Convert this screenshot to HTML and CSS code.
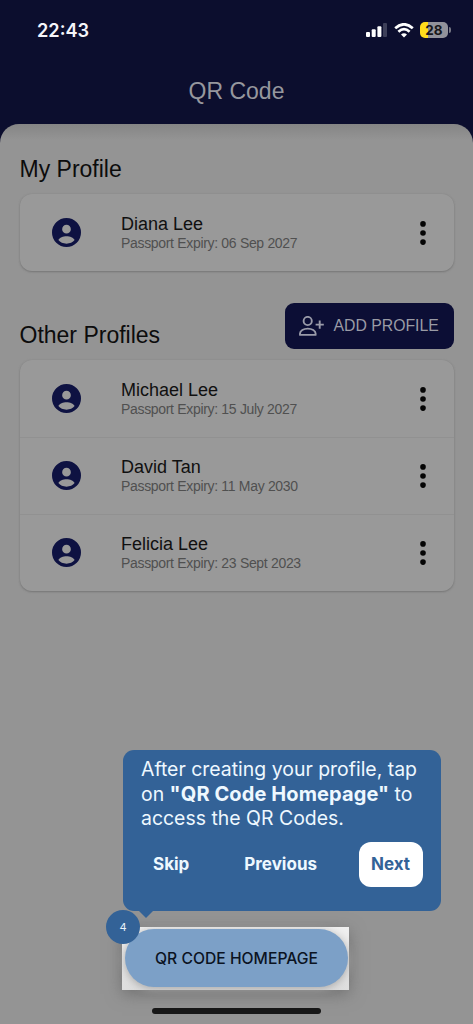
FILE: index.html
```html
<!DOCTYPE html>
<html lang="en">
<head>
<meta charset="utf-8">
<title>QR Code</title>
<link rel="stylesheet" href="styles.css">
</head>
<body>
<svg class="defs" width="0" height="0" aria-hidden="true">
  <symbol id="account" viewBox="2 2 20 20"><path fill="#0e1242" fill-rule="evenodd" d="M12 2a10 10 0 1 0 0 20 10 10 0 0 0 0-20zm0 4.7a3 3 0 1 1 0 6 3 3 0 0 1 0-6zM6.4 17.2c.7-1.7 3.3-2.7 5.6-2.7s4.900 1 5.600 2.700c-1.300 1.500-3.200 2.500-5.600 2.500s-4.300-1-5.600-2.500z"/></symbol>
  <symbol id="more" viewBox="0 0 6 24"><circle cx="3" cy="2.900" r="2.800"/><circle cx="3" cy="12" r="2.800"/><circle cx="3" cy="21.100" r="2.800"/></symbol>
</svg>
<div class="screen">
  <header class="header">
    <div class="status">
      <span class="time">22:43</span>
      <div class="indicators">
        <svg width="21" height="14" viewBox="0 0 21 14"><g fill="#fff"><rect x="0" y="9" width="4" height="5" rx="1"/><rect x="5.700" y="6.300" width="4" height="7.700" rx="1"/><rect x="11.400" y="3.200" width="4" height="10.800" rx="1"/></g><rect x="17" y="0" width="4" height="14" rx="1" fill="#3d3f59"/></svg>
        <svg width="20" height="15" viewBox="0 0 20 15" fill="none" stroke="#fff" stroke-width="2.700"><path d="M1.200 5.200Q10-2.600 18.800 5.200"/><path d="M4.400 8.700Q10 3.500 15.600 8.700"/><path d="M10 14.500l-3-3q3-2.400 6 0z" fill="#fff" stroke="none"/></svg>
        <div class="battery">28</div>
      </div>
    </div>
    <h1 class="title">QR Code</h1>
  </header>
  <main class="sheet">
    <h2 class="heading">My Profile</h2>
    <section class="card">
      <div class="row"><svg class="avatar"><use href="#account"/></svg><div class="info"><div class="name">Diana Lee</div><div class="expiry">Passport Expiry: 06 Sep 2027</div></div><svg class="more"><use href="#more"/></svg></div>
    </section>
    <div class="others">
      <h2 class="heading">Other Profiles</h2>
      <div class="add">
        <svg width="26" height="20" viewBox="0 0 26 20" fill="none" stroke="#9a9ba9" stroke-width="1.900"><circle cx="8.700" cy="5" r="4.100"/><path d="M1 18.900v-1.400c0-2.700 3.600-4.900 7.800-4.900s7.800 2.200 7.800 4.900v1.400z" stroke-linejoin="round"/><path d="M20.700 4.500v8.200M16.600 8.600h8.200"/></svg>
        <span>ADD PROFILE</span>
      </div>
    </div>
    <section class="card">
      <div class="row"><svg class="avatar"><use href="#account"/></svg><div class="info"><div class="name">Michael Lee</div><div class="expiry">Passport Expiry: 15 July 2027</div></div><svg class="more"><use href="#more"/></svg></div>
      <div class="row"><svg class="avatar"><use href="#account"/></svg><div class="info"><div class="name">David Tan</div><div class="expiry">Passport Expiry: 11 May 2030</div></div><svg class="more"><use href="#more"/></svg></div>
      <div class="row"><svg class="avatar"><use href="#account"/></svg><div class="info"><div class="name">Felicia Lee</div><div class="expiry">Passport Expiry: 23 Sept 2023</div></div><svg class="more"><use href="#more"/></svg></div>
    </section>
  </main>
  <footer class="footer">
    <div class="spotlight"><div class="homepage">QR CODE HOMEPAGE</div></div>
    <div class="home-bar"></div>
  </footer>
  <aside class="tour">
    <p class="message">After creating your profile, tap<br>on <b>"QR Code Homepage"</b> to<br>access the QR Codes.</p>
    <div class="actions"><span>Skip</span><span class="previous">Previous</span><span class="next">Next</span></div>
  </aside>
  <div class="step">4</div>
</div>
</body>
</html>
```
FILE: styles.css
```css
* { box-sizing: border-box; }
body { margin: 0; background: #0c0e2e; font-family: "Liberation Sans", Arial, sans-serif; }
h1, h2, p { margin: 0; font-weight: 400; }
.defs { position: absolute; }
.screen { position: relative; width: 473px; height: 1024px; overflow: hidden; display: flex; flex-direction: column; }
.header { height: 124px; flex: none; background: #0c0e2e; }
.status { display: flex; justify-content: space-between; align-items: center; height: 60px; padding: 0 22px 0 37px; }
.time { font: 600 18.200px/24px Inter, sans-serif; color: #f5f5fa; }
.indicators { display: flex; align-items: center; gap: 6.500px; }
.indicators svg { flex: none; }
.battery { position: relative; width: 28px; height: 16px; margin-right: 3px; border-radius: 5px; background: linear-gradient(90deg, #ffdc1c 8px, #92929b 8px); font: 700 13.500px/16px Inter, sans-serif; text-align: center; color: #171719; }
.battery::after { content: ""; position: absolute; right: -3px; top: 5px; width: 2px; height: 6px; border-radius: 0 2px 2px 0; background: #777885; }
.title { color: #96979e; font-size: 23px; line-height: 28px; text-align: center; padding-top: 17px; }
.sheet { flex: 1; padding: 30px 19.500px 0; background: linear-gradient(#858585, #949494 16px); border-radius: 19px 19px 0 0; }
.heading { font-size: 23px; line-height: 30px; color: #0c0c0c; }
.card { margin-top: 10px; border-radius: 12px; background: #999; box-shadow: 0 1px 2px #777, 0 0 2px #8a8a8a; }
.row { height: 77px; padding: 0 27.500px 0 32.500px; display: flex; align-items: center; }
.row + .row { box-shadow: inset 0 1px #919191; }
.avatar { width: 29px; height: 29px; flex: none; }
.info { flex: 1; padding: 1px 0 0 40px; }
.name { font-size: 18px; line-height: 20px; color: #101010; }
.expiry { font-size: 14px; letter-spacing: -0.320px; line-height: 19px; color: #505050; }
.more { width: 6px; height: 24px; flex: none; fill: #050505; }
.others { height: 79px; margin-bottom: 1px; padding-top: 32px; display: flex; justify-content: space-between; align-items: flex-start; }
.others .heading { padding-top: 17px; }
.others + .card { margin-top: 10px; }
.add { width: 169px; height: 46px; border-radius: 9px; background: #0c0e35; color: #9a9ba5; display: flex; align-items: center; padding-left: 14px; gap: 9px; font-size: 15.800px; white-space: nowrap; }
.footer { flex: none; height: 97px; background: #949494; display: flex; flex-direction: column; align-items: center; }
.spotlight { width: 227px; height: 63px; align-self: flex-start; margin-left: 122px; padding: 2px 1px 2px 3px; background: linear-gradient(#f0f0f0, #dedede); box-shadow: 0 4px 15px #707070; }
.homepage { width: 223px; height: 58px; border-radius: 29px; background: #7ca0c7; box-shadow: 0 2px 8px #aaa; display: flex; align-items: center; justify-content: center; color: #0b1322; font: 500 15.700px Inter, sans-serif; }
.home-bar { width: 169px; height: 6px; margin-top: 18px; border-radius: 3px; background: #171717; }
.tour { position: absolute; left: 122.500px; top: 750px; width: 318px; height: 161px; border-radius: 11px; background: #336297; padding: 7px 18px 0 18.500px; font-family: Inter, sans-serif; color: #eef8ff; }
.tour::after { content: ""; position: absolute; left: 15px; top: 160px; border: 8px solid transparent; border-bottom: 0; border-top-color: #336297; }
.message { font-size: 19.450px; line-height: 24.500px; white-space: nowrap; }
.message b { font-size: 20px; letter-spacing: 0.100px; }
.actions { display: flex; align-items: center; margin-top: 11px; padding-left: 12px; font-size: 17px; font-weight: 700; }
.previous { margin: 0 auto 0 55px; }
.next { width: 64px; height: 45px; border-radius: 12px; background: #fff; color: #336297; display: grid; place-items: center; }
.step { position: absolute; left: 106px; top: 910px; width: 34px; height: 34px; border-radius: 50%; background: #336297; color: #e8f2fa; display: grid; place-items: center; font: 11px Inter, sans-serif; }
```
